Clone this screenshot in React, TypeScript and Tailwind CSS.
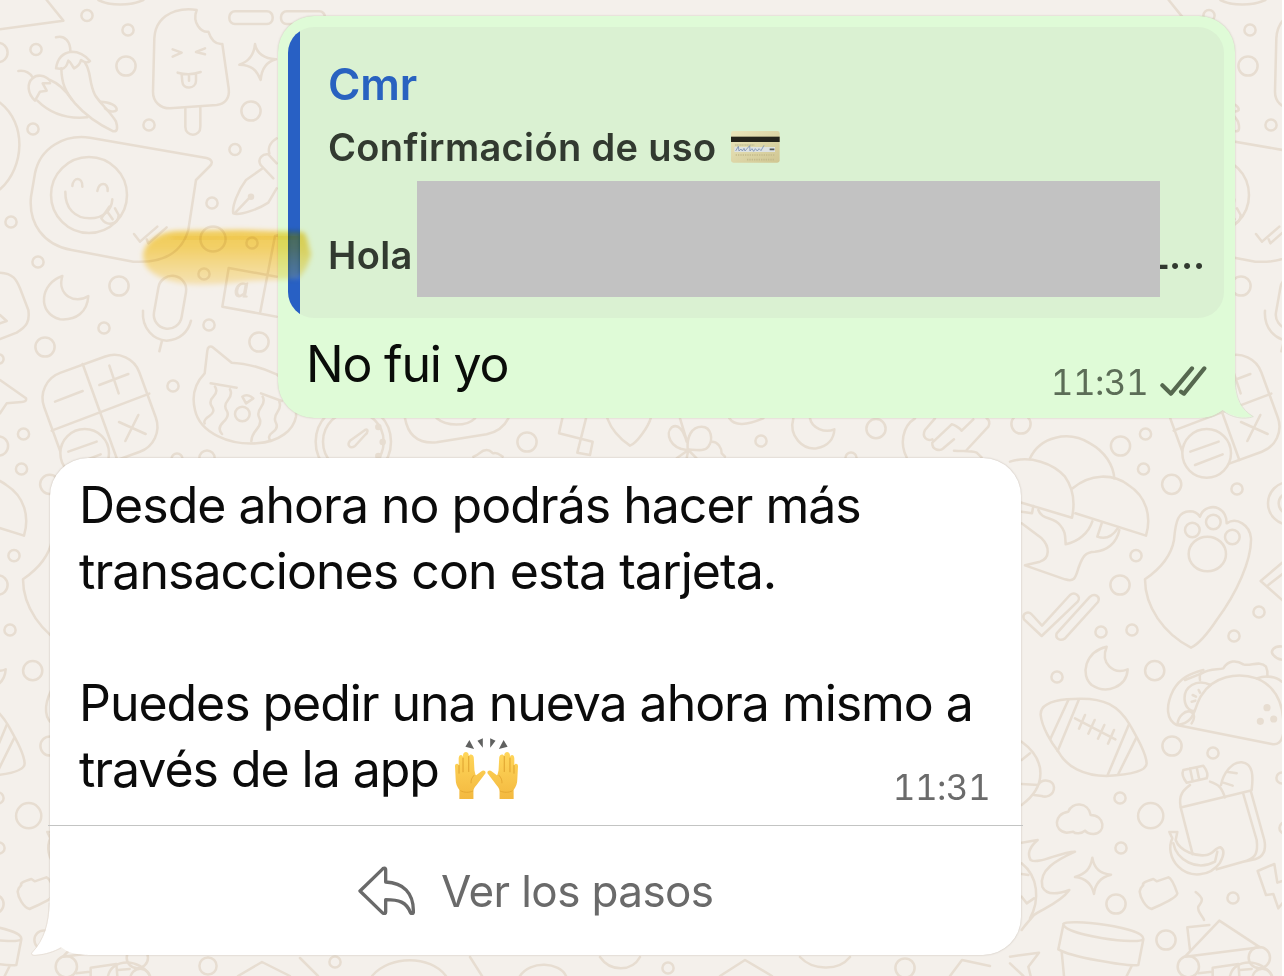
type Dot = [number, number, number]

// pattern repeats horizontally every 1122px
const rings: Dot[] = [
  [87, 15.5, 6], [128, 30, 6], [126, 66, 10], [36, 49.5, 6], [-2, 52.5, 10], [251, 111, 10],
  [149, 125, 6], [33, 129, 6], [235, 149.5, 6], [212, 203, 6], [11, 222, 6], [213, 239, 13],
  [252, 243, 6], [38, 262, 6], [119, 286, 10], [204, 274, 6], [104, 328, 6], [45, 347, 10],
  [209, 325, 6], [259, 342, 10], [173, 386, 6], [-1, 359, 5], [23.5, 434, 6], [-1.5, 446, 10],
  [21.5, 469, 6], [177, 459, 6], [207, 458, 8], [527, 442, 10], [761, 441, 6], [876, 428.7, 10],
  [1021, 424, 10], [851, 458, 6], [1171.7, 484.3, 10], [1237, 489, 6], [1136, 555.7, 6],
  [1120, 585, 10], [1259, 612, 6], [1234, 636, 6], [1132, 630, 6], [1101, 632, 6],
  [1154.7, 670.7, 10], [1057, 677, 6], [1172, 746, 10], [1213, 753, 6], [1120, 798, 6],
  [1150.7, 815.7, 13], [1121, 848, 6], [1116, 904, 10], [1233, 898, 6], [1166, 940, 10],
  [1282, 778, 6], [1285, 828, 6], [208, 966, 9], [335, 962, 6], [668, 968, 6], [905, 968, 10],
]

const topLeft = [
  'M295 0C330 18 390 18 430 0M140 0L190 62L0 88',
  'M590 30C570 26 545 28 525 34C485 48 465 75 463 115L459 275C459 305 480 325 510 325L650 315C675 312 690 295 686 265L667 132C650 134 635 125 625 95C605 98 575 70 590 30Z',
  'M556 326V380C556 412 602 412 601 380V320',
  'M518 148L545 158L518 170M615 145L588 156L615 163M533 218Q568 228 602 216M545 224L547 245C548 270 588 268 588 242V222M567 224V242',
  'M765 132C770 160 790 175 828 178C800 185 785 205 782 240C770 210 755 195 718 194C745 185 762 165 765 132Z',
  'M168 112C195 105 212 125 211 155M55 213C75 210 90 220 98 232',
  'M168 205C172 175 190 158 215 155C240 155 255 165 270 183C262 190 250 186 243 180C240 195 232 200 222 205C215 195 212 185 205 182C200 200 195 205 185 207Z',
  'M184 205C185 250 195 275 225 310C260 350 300 375 340 394C352 395 354 385 348 365C335 340 300 310 285 285C265 245 275 215 255 188',
  'M150 242C135 225 110 222 98 235C80 250 82 280 105 302L120 275L140 272L128 250L150 250',
  'M112 302C150 340 200 358 262 352M150 240C175 250 195 268 215 298M300 305C330 305 352 318 350 330C345 338 325 335 315 325',
  'M0 308C80 370 75 500 0 568',
  'M270 413L620 474C635 478 640 488 630 498L588 540L565 690C545 760 490 790 400 785L215 750C130 735 85 670 93 590L105 520C120 445 190 402 270 413Z',
  'M217 558C220 530 248 530 247 560M292 573C297 545 325 545 323 573M196 575C195 625 225 655 270 655C310 655 335 630 337 598',
  'M304 655L328 620M345 625L356 645C355 675 320 680 304 655M322 635L338 658',
  'M402 702L420 725L472 680M440 718L445 730L500 682',
  'M788 505L738 540C715 570 695 620 700 640C720 648 780 625 805 608L830 565M706 638L748 594M830 415C805 430 805 450 808 460M830 490L805 463C790 460 770 475 782 495L820 535',
]

const midLeft = [
  'M0 158C40 160 50 180 60 205L85 270C90 305 80 320 50 338L0 357M0 285L20 303L0 310',
  'M187 168C120 190 110 280 180 298C230 302 262 275 265 228C225 255 170 225 187 168Z',
  'M429 272C425 325 460 360 500 362C540 360 565 335 573 302M486 362L478 394',
  'M835 46L825 48L781 275M830 170L686 144L667 260L830 290',
  'M248 432L352 720M155 632L448 521',
  'M165 545L248 513M298 495L385 462M328 437L356 520M357 606L437 642M415 585L376 663',
  'M0 480L78 535C80 542 75 545 65 546L20 550L0 580',
  'M695 428L640 383C630 375 623 382 622 392L614 460C585 490 575 530 585 570C600 640 690 675 770 670C840 665 880 630 888 590C892 540 870 490 830 463C790 445 750 430 695 428',
  'M632 490L710 503M783 520L845 543',
  'M645 500q10 15-5 30t-4 30t-8 28t-14 22M690 508q8 15-6 32t-4 32t-10 34t-4 36M788 530q8 15-5 32t-5 32t-8 34t-16 36M838 545q6 15-6 32t-4 32t-10 28t-6 26',
  'M727 530C740 520 755 530 760 535L738 550Z',
]

const bottomOfSent = [
  'M195 120C205 115 205 128 195 135L165 168C150 178 140 165 150 152Z',
  'M315 85C325 140 360 162 410 157L560 133C595 125 615 105 625 85M410 85C440 110 500 110 525 85',
  'M787 85L777 130L878 155L870 195L832 188L858 85',
  'M922 85C935 120 965 150 990 167C1010 160 1045 110 1052 85',
  'M1160 155C1150 120 1135 100 1115 112C1095 130 1110 175 1160 180M1163 178C1160 140 1175 110 1205 110C1235 110 1240 150 1225 170C1215 185 1190 180 1163 178M1160 150L1140 85',
  'M1235 155C1255 155 1265 175 1265 190L1275 200M1165 180L1130 205M1165 180L1160 205M1165 180L1190 205',
  'M520 200C540 195 540 180 560 180C575 180 575 190 580 190C590 185 600 195 608 200',
  'M1288 85C1305 110 1340 105 1390 85',
  'M1480 85C1465 140 1510 180 1550 175C1585 168 1602 145 1603 118C1575 130 1535 115 1530 85',
  'M1845 85C1805 110 1800 165 1820 202M1905 85L1875 120C1865 140 1880 155 1897 148M1897 158C1895 180 1920 185 1930 175L1962 148M1897 158L1955 103C1965 105 1980 115 1985 122L2020 88M2000 180L2065 110C2072 95 2065 88 2060 85M1962 182C1990 185 2010 180 2030 188L2045 202',
]

const midRight = [
  'M60 235C90 170 175 150 240 190C285 215 310 255 313 295',
  'M0 245C60 225 130 250 165 290C190 325 195 370 186 413L35 368',
  'M188 325C240 280 310 280 355 315C410 350 425 410 408 467L196 400',
  'M35 395L66 400L70 378M85 390C95 420 130 410 150 435C168 455 165 470 167 493C205 485 235 460 247 424M275 430L262 470C290 480 310 465 323 445',
  'M328 450C320 490 290 512 255 515C220 515 215 540 205 565C195 600 190 605 165 598L45 556L90 545C120 535 120 500 95 475L35 430',
  'M95 768L42 718C35 700 55 690 67 705L96 737L180 645C195 633 215 650 203 665Z',
  'M140 760L240 650C255 638 272 650 264 666L165 775C150 785 135 775 140 760Z',
  'M405 598C460 560 485 520 492 480C497 420 505 395 540 394C555 394 563 400 570 410C580 380 610 378 625 385C645 395 650 415 650 430C680 410 720 435 723 475C725 540 680 640 620 720C590 765 560 795 543 803C460 760 405 680 405 598Z',
  'M820 545L752 603L820 663M820 580L775 615',
  'M290 800C225 815 210 885 245 915C290 945 350 920 353 868C310 885 270 850 290 800Z',
  'M820 800C790 795 780 815 790 825C800 838 820 840 820 840',
  'M525 900L575 880C600 865 625 870 640 865C655 840 680 840 700 853C720 860 750 840 768 860C775 875 772 885 772 890',
]

const bottomRight = [
  'M500 165C560 160 550 110 575 75C610 20 680 5 740 25C800 50 825 110 820 190C815 220 800 225 785 222L500 165C470 150 465 110 490 60C510 25 540 10 580 0',
  'M602 45C560 25 520 50 524 90C526 115 545 125 553 122M503 160C505 140 525 120 540 125C555 130 555 145 545 160M570 30C568 15 570 10 575 8M740 25C770 15 800 20 815 35',
  'M548 75L558 80M545 95L556 92M566 60L570 68',
  'M170 88C130 92 90 105 92 135C95 170 125 220 145 245C170 290 220 318 290 318C350 315 410 305 410 280C408 250 385 210 360 165C325 105 280 85 210 86Z',
  'M175 90L122 205M207 88L143 243M357 163L293 315M378 205L325 312M195 145L316 208M225 135L207 176M254 150L235 191M283 165L264 206M312 180L294 221',
  'M35 215C110 270 110 350 35 405M35 270L60 250M35 342L85 345C95 325 130 328 132 352C132 380 105 382 95 378L72 375',
  'M170 488C130 485 130 430 175 425C185 395 235 395 242 435C285 435 290 490 250 492C240 492 230 488 225 482C215 492 195 492 190 485Z',
  'M247 563C252 595 270 612 303 614C272 622 255 640 252 672C245 640 228 624 195 621C228 612 242 595 247 563Z',
  'M35 518L83 510C60 530 50 550 62 570C85 585 150 545 195 545C140 570 85 600 97 650C110 680 150 670 178 660C150 700 90 720 72 735C60 750 45 765 35 780M35 580C85 620 90 690 60 745M35 612L55 615M35 680L50 700L72 685',
  'M515 412L720 362M512 412L548 553M700 372L740 510C745 550 735 565 710 572L620 598M722 362L763 510C770 545 755 562 735 568L700 575',
  'M512 410C505 375 520 360 540 345M600 335C630 345 635 355 645 382M520 300L580 287C590 300 595 315 590 325L530 338C520 325 515 310 520 300M540 295L548 333M560 292L568 330',
  'M633 345C640 310 665 275 695 277C730 280 730 320 725 360M650 305L680 310M640 338L668 347',
  'M478 486L502 486L497 510C510 545 560 560 590 555C610 552 618 530 632 532C645 540 640 560 630 578C600 620 540 625 505 590C480 565 475 530 487 505ZM490 520C500 570 560 605 615 575L622 545',
  'M793 582L743 603L768 675L790 672L805 715L825 690M793 582L802 638L820 632',
  'M392 655L400 645C395 640 405 635 430 627L440 634L475 622C485 625 495 650 502 670C500 685 450 705 425 717C405 712 390 680 389 665Z',
  'M557 666C590 690 570 700 565 710C560 725 580 740 582 750',
  'M160 762C170 745 400 770 400 806C395 828 160 795 160 762ZM160 765L145 838C180 860 350 890 385 885L400 808M155 845L162 918M365 888L350 918',
  'M525 860L628 752L750 832L525 860M540 840L532 772L598 765M608 918V893L685 882L688 918M565 910L606 905M690 900L725 897',
  'M0 860L87 848L55 890L62 918M0 880L40 918',
]

// small bits peeking out under the received bubble
const bottomEdge = [
  'M108 976C112 958 140 958 150 976M238 976L262 962L290 976M300 958L318 976M372 976C390 955 430 955 446 976',
  'M470 957L482 976M520 976C530 960 560 962 566 976M600 957C610 972 632 972 640 957M720 976L745 960L772 976M800 957C812 970 838 972 850 957M950 976L962 960L990 966',
]

function Strokes({ paths }: { paths: string[] }) {
  return (
    <>
      {paths.map((d) => (
        <path key={d} d={d} />
      ))}
    </>
  )
}

function Wallpaper() {
  return (
    <svg className="absolute inset-0" width="1282" height="976" viewBox="0 0 1282 976" aria-hidden="true">
      <defs>
        <g id="doodles" fill="none" stroke="#e7ddd1" strokeWidth="2.5" strokeLinecap="round" strokeLinejoin="round">
          {rings.map(([cx, cy, r]) => (
            <circle key={`${cx}-${cy}`} cx={cx} cy={cy} r={r - 0.4} />
          ))}
          <g transform="scale(.33333)" strokeWidth="7.6">
            <Strokes paths={topLeft} />
            <rect x="688" y="34" width="130" height="38" rx="17" />
            <rect x="843" y="34" width="132" height="38" rx="17" />
            <circle cx="267" cy="585" r="114" />
            <circle cx="753" cy="590" r="6" fill="#e7ddd1" />
          </g>
          <g transform="translate(0 220) scale(.33333)" strokeWidth="7.6">
            <rect x="468" y="167" width="84" height="160" rx="42" transform="rotate(10 510 247)" />
            <rect x="148" y="425" width="304" height="304" rx="80" transform="rotate(-20 300 577)" />
            <Strokes paths={midLeft} />
            <circle cx="254" cy="700" r="73" fill="#f4f0eb" />
            <path d="M205 695L290 665M219 735L302 703" />
            <circle cx="727" cy="582" r="22" />
            <text x="703" y="230" fill="#e7ddd1" strokeWidth="3" className="font-['Liberation_Serif'] text-[88px] italic">a</text>
          </g>
          <g transform="translate(300 390) scale(.33333)" strokeWidth="7.6">
            <circle cx="160" cy="155" r="113" />
            <circle cx="160" cy="155" r="91" />
            <circle cx="235" cy="111" r="6" fill="#e7ddd1" />
            <circle cx="248" cy="156" r="6" fill="#e7ddd1" />
            <circle cx="235" cy="198" r="6" fill="#e7ddd1" />
            <Strokes paths={bottomOfSent} />
          </g>
          <g transform="translate(1010 380) scale(.33333)" strokeWidth="7.6">
            <Strokes paths={midRight} />
            <circle cx="547" cy="450" r="22" />
            <circle cx="610" cy="426" r="22" />
            <circle cx="667" cy="471" r="22" />
            <ellipse cx="592" cy="522" rx="56" ry="52" />
            <circle cx="838" cy="370" r="64" />
            <circle cx="838" cy="370" r="32" />
          </g>
          <g transform="translate(1010 670) scale(.33333)" strokeWidth="7.6">
            <Strokes paths={bottomRight} />
            <circle cx="771" cy="113" r="7" fill="#e7ddd1" />
            <circle cx="751" cy="154" r="7" fill="#e7ddd1" />
            <circle cx="791" cy="147" r="7" fill="#e7ddd1" />
            <circle cx="535" cy="890" r="32" />
            <circle cx="748" cy="863" r="32" />
            <circle cx="757" cy="926" r="30" />
          </g>
          <Strokes paths={bottomEdge} />
        </g>
      </defs>
      <use href="#doodles" />
      <use href="#doodles" x="1122" />
      <use href="#doodles" x="-1122" />
    </svg>
  )
}

function CardEmoji() {
  return (
    <svg className="ml-[14px] h-8 w-[49px]" viewBox="0 0 147 96" role="img" aria-label="tarjeta">
      <defs>
        <linearGradient id="card" x1="0" y1="0" x2="1" y2="1">
          <stop offset="0" stopColor="#eae6bd" />
          <stop offset="1" stopColor="#d0c692" />
        </linearGradient>
      </defs>
      <rect width="146" height="95" rx="7" fill="url(#card)" />
      <rect y="17" width="146" height="16" fill="#25241c" />
      <path d="M12 42H70" stroke="#a5a07b" strokeWidth="2" strokeDasharray="4 1" />
      <rect x="10" y="48" width="122" height="15" fill="#dde2e2" />
      <path d="M14 60l8-14 2 14 6-6 4 6 5-8 3 8 14-16 1 16 6-7 5 8 5-8 6 7 5-7 6 6 9-16" fill="none" stroke="#7f93b5" strokeWidth="2.6" />
      <path d="M116 55h14" stroke="#54595a" strokeWidth="5" />
      <path d="M14 72h118M48 86h84" stroke="#c4bb8c" strokeWidth="5" strokeDasharray="4 3" />
    </svg>
  )
}

function Hand() {
  return (
    <g>
      <path
        d="M13 182V155C6 145 2 136 2 122L0 84C0 75 10 75 11 82V61C11 48 23 48 24 58V51C25 39 40 39 41 51V55C44 46 55 49 56 58L58 96C61 108 61 113 65 110L79 99C85 94 95 99 90 107L70 133C61 145 55 150 55 160V182Z"
        fill="url(#skin)"
      />
      <path d="M12 82V105M24 60V101M41 55V100" fill="none" stroke="#dc9f2c" strokeWidth="2.8" strokeLinecap="round" />
      <path d="M57 111C50 119 47 126 48 135M16 157C28 164 43 163 54 158" fill="none" stroke="#e3a631" strokeWidth="2.8" />
      <path d="M31 26L43 6L57 33ZM67 8L83 1V29Z" fill="#606160" />
    </g>
  )
}

function HandsEmoji() {
  return (
    <svg className="mb-[-12px] ml-4 inline-block h-[61px] w-[63px] align-baseline" viewBox="0 0 188 182" role="img" aria-label="manos arriba">
      <defs>
        <linearGradient id="skin" x1="0" y1="0" x2="0" y2="1">
          <stop offset="0" stopColor="#ffd65a" />
          <stop offset="1" stopColor="#f3b940" />
        </linearGradient>
      </defs>
      <Hand />
      <g transform="translate(188 0) scale(-1 1)">
        <Hand />
      </g>
    </svg>
  )
}

function ReplyIcon() {
  return (
    <svg className="mt-px h-[49px] w-[58px]" viewBox="55 408 174 147" fill="none" stroke="#6a6a6a" strokeWidth="10" strokeLinejoin="round" aria-hidden="true">
      <path d="M61 483L127 419C131 413 138 413 138 420V456C190 458 223 488 221 547C220 552 214 552 212 547C200 516 178 509 138 509V546C138 552 131 552 127 547Z" />
    </svg>
  )
}

function Ticks() {
  return (
    <svg className="mb-[5px] ml-3 h-8 w-[47px]" viewBox="390 375 141 96" fill="none" stroke="#56684f" strokeWidth="12.5" strokeLinecap="round" strokeLinejoin="round" aria-hidden="true">
      <path d="M397 436L423 461L486 385M453 455L462 461L523 385" />
    </svg>
  )
}

function Highlight() {
  return (
    <svg className="absolute top-[215px] left-[130px] mix-blend-multiply" width="200" height="85" viewBox="130 215 200 85" aria-hidden="true">
      <defs>
        <linearGradient id="marker" x1="0" y1="0" x2="0" y2="1">
          <stop offset="0" stopColor="#fcd95f" />
          <stop offset=".3" stopColor="#fddc6d" />
          <stop offset=".55" stopColor="#fee48e" />
          <stop offset="1" stopColor="#fff0c4" />
        </linearGradient>
        <filter id="soft" x="-10%" y="-30%" width="120%" height="160%">
          <feGaussianBlur stdDeviation="2.8" />
        </filter>
      </defs>
      <path
        d="M143 256C144 243 157 232 178 231L240 230L303 232C308 236 307 242 311 254C308 266 304 274 297 279L250 281C225 284 200 286 180 283C160 279 144 272 143 256Z"
        fill="url(#marker)"
        filter="url(#soft)"
      />
      <path d="M172 238C200 241 250 236 298 237" stroke="#f9cd45" strokeWidth="7" opacity=".45" fill="none" filter="url(#soft)" />
    </svg>
  )
}

function SentBubble() {
  return (
    <section className="relative ml-[278px] flex h-[402px] w-[957px] flex-col rounded-[36px] bg-[#dffbd7] pt-[11px] pr-[11px] pl-[10px] shadow-[0_0_2px_rgba(120,100,80,0.35)]">
      <svg className="absolute right-[-21px] bottom-[-2px] h-[48px] w-[60px]" viewBox="498 396 180 144" aria-hidden="true">
        <path d="M614 404V425C616 475 632 508 668 529C640 538 605 530 578 510C562 522 545 532 510 533L510 440Z" fill="#dffbd7" />
        <path d="M616 425C618 475 633 508 670 530C640 540 605 533 578 512C562 524 545 534 525 535" fill="none" stroke="#d5dcc8" strokeWidth="2" />
      </svg>
      <div className="relative flex h-[291px] overflow-hidden rounded-[26px] bg-[#daf1d2]">
        <div className="w-3 overflow-hidden bg-[#2860c4] pt-[206px]">
          <div className="h-[46px] bg-[#4b7ef0] blur-[2px]" />
        </div>
        <div className="flex-1 pt-[31px] pr-[19px] pl-7 text-[38px] leading-[54px] font-semibold tracking-[0.35px] text-[#323a30]">
          <p className="text-[44px] leading-[52px] tracking-[-0.1px] text-[#2962c0]">Cmr</p>
          <div className="mt-[10px] flex h-[54px] items-center">
            <span>Confirmación de uso</span>
            <CardEmoji />
          </div>
          <div className="mt-[54px] flex justify-between">
            <span>Hola</span>
            <span className="tracking-[-0.1px]">L...</span>
          </div>
        </div>
        <div className="absolute top-[154px] left-[129px] h-[116px] w-[743px] bg-[#c2c2c2]" />
      </div>
      <div className="mt-[13px] flex flex-1 justify-between pr-[17px] pl-[18px]">
        <p className="text-[50px] leading-[66px] tracking-[-1.2px] text-[#0a0c09]">No fui yo</p>
        <div className="mb-4 flex items-end text-[35px] leading-10 tracking-[-0.6px] text-[#5c6d57] tabular-nums">
          <time>11:31</time>
          <Ticks />
        </div>
      </div>
    </section>
  )
}

function ReceivedBubble() {
  return (
    <section className="relative mt-10 ml-[50px] h-[497px] w-[971px] rounded-[38px] bg-white shadow-[0_0_2px_rgba(120,100,80,0.4)]">
      <svg className="absolute bottom-[-1px] left-[-20px] h-[60px] w-[60px]" viewBox="90 889 180 180" aria-hidden="true">
        <path d="M149 895V910C148 970 135 1020 96 1060C95 1064 100 1066 108 1065C140 1062 160 1055 183 1042C205 1060 225 1065 260 1065L250 930Z" fill="#fff" />
        <path d="M147 910C146 970 133 1020 95 1060C93 1066 100 1068 108 1067C140 1064 160 1057 183 1045" fill="none" stroke="#e2dad0" strokeWidth="2" />
      </svg>
      <div className="relative h-[367px] pt-[14px] pl-[29px]">
        <p className="text-[50px] leading-[66px] tracking-[-1px] whitespace-nowrap text-[#0b0b0b]">
          Desde ahora no podrás hacer más
          <br />
          <span className="tracking-[-0.95px]">transacciones con esta tarjeta.</span>
        </p>
        <p className="mt-[66px] h-[132px] text-[50px] leading-[66px] tracking-[-1.05px] whitespace-nowrap text-[#0b0b0b]">
          Puedes pedir una nueva ahora mismo a
          <br />
          través de la app
          <HandsEmoji />
        </p>
        <time className="absolute right-[31px] bottom-[18px] text-[35px] leading-10 tracking-[-0.6px] text-[#6b6b6b] tabular-nums">11:31</time>
      </div>
      <button className="relative -mx-[2px] flex h-[130px] w-[975px] items-start border-t border-[#c3c4c3] pt-[39px] pl-[310px] text-[44px] leading-[52px] tracking-[-0.6px] text-[#6a6a6a]">
        <ReplyIcon />
        <span className="ml-[25px]">Ver los pasos</span>
      </button>
    </section>
  )
}

export default function App() {
  return (
    <main className="relative h-[976px] w-[1282px] overflow-hidden bg-[#f4f0eb] pt-4 font-['Inter',sans-serif]">
      <Wallpaper />
      <SentBubble />
      <ReceivedBubble />
      <Highlight />
    </main>
  )
}
